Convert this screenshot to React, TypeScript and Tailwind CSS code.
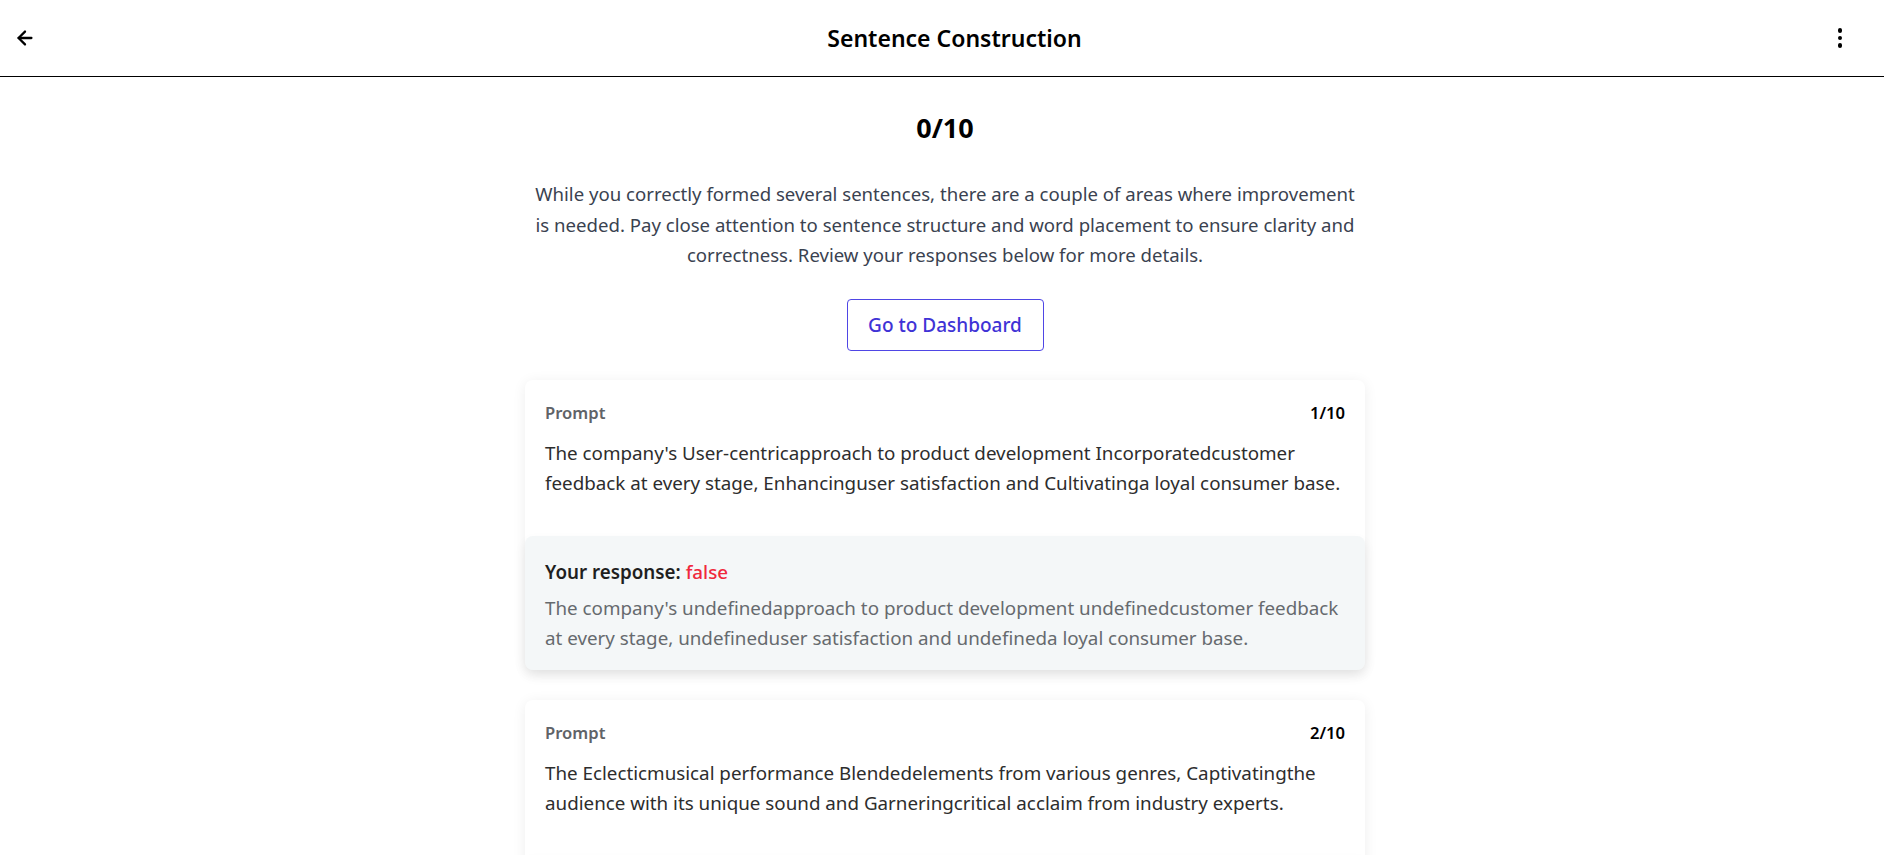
import { ArrowLeft } from 'lucide-react';

interface Question {
  prompt: string;
  response: string;
}

const QUESTIONS: Question[] = [
  {
    prompt:
      "The company's User-centricapproach to product development Incorporatedcustomer feedback at every stage, Enhancinguser satisfaction and Cultivatinga loyal consumer base.",
    response:
      "The company's undefinedapproach to product development undefinedcustomer feedback at every stage, undefineduser satisfaction and undefineda loyal consumer base.",
  },
  {
    prompt:
      'The Eclecticmusical performance Blendedelements from various genres, Captivatingthe audience with its unique sound and Garneringcritical acclaim from industry experts.',
    response:
      'The undefinedmusical performance undefinedelements from various genres, undefinedthe audience with its unique sound and undefinedcritical acclaim from industry experts.',
  },
];

function QuestionCard({ q, index }: { q: Question; index: number }) {
  return (
    <div className="bg-white rounded-lg shadow-[0_2px_14px_rgba(0,0,0,0.07)]">
      <div className="px-5 pt-[24px] pb-[38px]">
        <div className="flex items-center justify-between h-5">
          <span className="text-[16.6px] font-semibold text-[#5f6368]">Prompt</span>
          <span className="text-[16.6px] font-semibold text-black">{index + 1}/10</span>
        </div>
        <p className="mt-[14px] text-[18.8px] leading-[30px] text-[#2d2d2d]">{q.prompt}</p>
      </div>
      <div className="bg-[#f4f7f8] rounded-lg px-5 pt-6 pb-[17px] shadow-[0_6px_12px_rgba(0,0,0,0.07)]">
        <div className="text-[18.8px] leading-6 font-semibold text-[#1f1f1f]">
          Your response: <span className="text-[#f0283c] font-medium">false</span>
        </div>
        <p className="mt-[9px] text-[18.8px] leading-[30px] text-[#666a6e]">{q.response}</p>
      </div>
    </div>
  );
}

export default function App() {
  return (
    <div className="min-h-screen bg-white" style={{ fontFamily: '"Noto Sans", "Open Sans", sans-serif' }}>
      <header className="h-[77px] border-b border-black flex items-center justify-between pl-[13px] pr-[32px]">
        <div className="w-[68px] flex items-center">
          <button className="w-6 h-6 flex items-center justify-center text-black">
            <ArrowLeft size={22} strokeWidth={2.5} />
          </button>
        </div>
        <h1 className="text-[23px] font-semibold text-black">Sentence Construction</h1>
        <button className="w-6 h-6 flex flex-col items-center justify-center gap-[3px] text-black">
          <span className="w-[4.5px] h-[4.5px] rounded-full bg-black" />
          <span className="w-[4.5px] h-[4.5px] rounded-full bg-black" />
          <span className="w-[4.5px] h-[4.5px] rounded-full bg-black" />
        </button>
      </header>

      <main className="w-[846px] pl-[6px] mx-auto flex flex-col items-center pt-[30px] pb-10">
        <div className="text-[27px] leading-[42px] font-bold text-black">0/10</div>
        <p className="mt-[30px] max-w-[830px] text-[18.6px] leading-[30.6px] text-[#3a4250] text-center">
          While you correctly formed several sentences, there are a couple of areas where improvement
          is needed. Pay close attention to sentence structure and word placement to ensure clarity and
          correctness. Review your responses below for more details.
        </p>
        <button className="mt-[28px] w-[197px] h-[52px] border border-[#4f46e5] rounded-[4px] text-[19px] font-medium text-[#3f33d6]">
          Go to Dashboard
        </button>

        <div className="w-full mt-[29px] flex flex-col gap-[30px]">
          {QUESTIONS.map((q, i) => (
            <QuestionCard key={i} q={q} index={i} />
          ))}
        </div>
      </main>
    </div>
  );
}
